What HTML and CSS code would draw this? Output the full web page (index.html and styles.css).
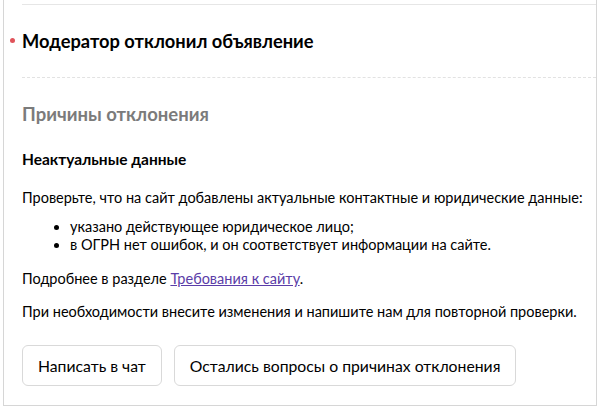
FILE: index.html
```html
<!DOCTYPE html>
<html lang="ru">
<head>
<meta charset="utf-8">
<link rel="stylesheet" href="styles.css">
</head>
<body>
<div class="frame">
  <div class="topline"></div>
  <div class="status">
    <span class="dot"></span>
    <h1 class="title">Модератор отклонил объявление</h1>
  </div>
  <div class="dashed"></div>
  <div class="content">
    <h2 class="reasons">Причины отклонения</h2>
    <h3 class="subtitle">Неактуальные данные</h3>
    <p class="text text-first">Проверьте, что на сайт добавлены актуальные контактные и юридические данные:</p>
    <ul class="list">
      <li>указано действующее юридическое лицо;</li>
      <li>в ОГРН нет ошибок, и он соответствует информации на сайте.</li>
    </ul>
    <p class="text">Подробнее в разделе <a class="link" href="#">Требования к сайту</a>.</p>
    <p class="text">При необходимости внесите изменения и напишите нам для повторной проверки.</p>
    <div class="buttons">
      <button class="btn">Написать в чат</button>
      <button class="btn">Остались вопросы о причинах отклонения</button>
    </div>
  </div>
</div>
</body>
</html>
```
FILE: styles.css
```css
html, body {
  margin: 0;
  padding: 0;
  background: #fff;
}
body {
  font-family: "Lato", "Noto Sans", sans-serif;
  color: #000;
  width: 600px;
  height: 411px;
  overflow: hidden;
}
.frame {
  margin: -1px 0 0 3px;
  height: 407px;
  width: 594px;
  border: 1px solid #d6d6d6;
  box-sizing: border-box;
}
.topline {
  margin: 4px 0 0 18px;
  height: 1px;
  background: #e6e6e6;
}
.status {
  display: flex;
  align-items: center;
  height: 73px;
  margin-top: -1px;
}
.dot {
  width: 5px;
  height: 5px;
  border-radius: 50%;
  background: #e0535a;
  margin-left: 6px;
  margin-right: 7px;
}
.title {
  margin: 0;
  font-size: 18.3px;
  font-weight: 700;
}
.dashed {
  margin-left: 18px;
  border-top: 1px dashed #e2e2e2;
}
.content {
  padding: 0 0 0 18px;
}
.reasons {
  margin: 24px 0 0;
  font-size: 18.5px;
  font-weight: 700;
  color: #7b7b7b;
  line-height: 24px;
}
.subtitle {
  margin: 23px 0 0;
  font-size: 15.5px;
  font-weight: 700;
  line-height: 20px;
}
.text {
  margin: 13px 0 0;
  font-size: 14.5px;
  line-height: 20px;
}
.text-first {
  margin-top: 19px;
}
.list {
  margin: 10px 0 15px;
  padding-left: 48px;
  font-size: 14.5px;
  line-height: 18px;
}
.list + .text {
  margin-top: 0;
}
.link {
  color: #5b3da8;
  text-decoration: underline;
}
.buttons {
  display: flex;
  gap: 12px;
  margin-top: 23px;
}
.btn {
  font-family: inherit;
  font-size: 15.75px;
  color: #000;
  background: #fff;
  border: 1px solid #d9d9d9;
  border-radius: 6px;
  height: 41px;
  padding: 0 15px;
}
```
